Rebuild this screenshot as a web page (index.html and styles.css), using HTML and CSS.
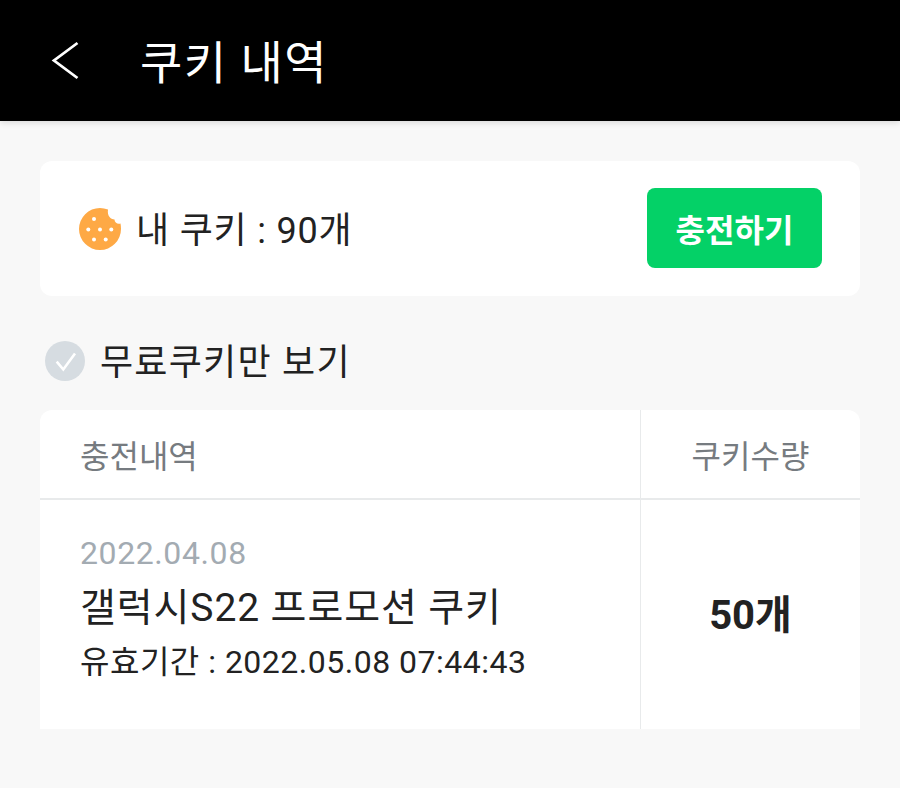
FILE: index.html
```html
<!DOCTYPE html>
<html lang="ko">
<head>
<meta charset="utf-8">
<title>쿠키 내역</title>
<link rel="stylesheet" href="styles.css">
</head>
<body>
<header class="topbar">
  <svg class="back" width="30" height="40" viewBox="0 0 30 40"><path d="M26.500 3 L3 20.500 L26.500 38" fill="none" stroke="#fff" stroke-width="2.800"/></svg>
  <h1 class="title">쿠키 내역</h1>
</header>
<main class="content">
  <section class="balance">
    <div class="balance-left">
      <svg class="cookie" width="42" height="42" viewBox="0 0 42 42">
        <path d="M21 0 A21 21 0 1 0 42 21 Q42 18 41.500 15.500 C38.500 16.500 35.500 14.500 35.500 11.500 C31.500 11.500 28 8 29 1.600 Q25 0 21 0 Z" fill="#fea945"/>
        <g fill="#fff">
          <circle cx="15" cy="11" r="2"/><circle cx="9.300" cy="21.500" r="2"/><circle cx="21" cy="21.500" r="2"/><circle cx="32.300" cy="21.500" r="2"/><circle cx="15" cy="31.500" r="2"/><circle cx="26.700" cy="31.500" r="2"/>
        </g>
      </svg>
      <span class="balance-text">내 쿠키 : 90개</span>
    </div>
    <button class="charge">충전하기</button>
  </section>
  <div class="filter">
    <svg class="check" width="40" height="40" viewBox="0 0 40 40"><circle cx="20" cy="20" r="20" fill="#d6dce1"/><path d="M11.700 20.700 L18.300 28.500 L30 12.500" fill="none" stroke="#fff" stroke-width="2.600"/></svg>
    <span class="filter-text">무료쿠키만 보기</span>
  </div>
  <section class="history">
    <div class="row head">
      <div class="col-main head-cell">충전내역</div>
      <div class="col-qty head-cell">쿠키수량</div>
    </div>
    <div class="row body">
      <div class="col-main item">
        <div class="date">2022.04.08</div>
        <div class="name">갤럭시S22 프로모션 쿠키</div>
        <div class="expiry">유효기간 : 2022.05.08 07:44:43</div>
      </div>
      <div class="col-qty amount">50개</div>
    </div>
  </section>
</main>
</body>
</html>
```
FILE: styles.css
```css
* { box-sizing: border-box; }
html, body { margin: 0; padding: 0; }
body {
  width: 900px;
  height: 788px;
  overflow: hidden;
  background: #f8f8f8;
  font-family: Roboto, "Noto Sans CJK KR", sans-serif;
  color: #222;
}
.topbar {
  height: 121px;
  background: #000;
  display: flex;
  align-items: center;
  padding-left: 51px;
  box-shadow: 0 2px 6px rgba(0,0,0,.12);
}
.back { display: block; margin-right: 59px; margin-top: -1px; }
.title { margin: 4px 0 0; font-size: 46px; font-weight: 400; color: #fff; letter-spacing: 1.500px; line-height: 1; }
.content { padding: 40px 40px 0; }
.balance {
  height: 135px;
  background: #fff;
  border-radius: 12px;
  display: flex;
  align-items: center;
  justify-content: space-between;
  padding: 0 38px 0 39px;
}
.balance-left { display: flex; align-items: center; gap: 15px; }
.cookie { display: block; }
.balance-text { font-size: 36px; line-height: 1; letter-spacing: 0.800px; padding-top: 5px; }
.charge {
  width: 175px;
  height: 80px;
  margin-top: -1px;
  border: 0;
  border-radius: 8px;
  background: #04d167;
  color: #fff;
  font: 700 32px Roboto, "Noto Sans CJK KR", sans-serif;
}
.filter { display: flex; align-items: center; gap: 15px; height: 114px; padding: 15px 0 0 5px; }
.check { display: block; }
.filter-text { font-size: 36px; line-height: 1; letter-spacing: 1.250px; padding-top: 4px; }
.history { background: #fff; border-radius: 12px 12px 0 0; }
.row { display: flex; }
.head { height: 90px; border-bottom: 2px solid #e8eaeb; }
.body { height: 229px; }
.col-main { flex: 1; padding-left: 40px; border-right: 1px solid #e8eaeb; }
.col-qty { width: 219px; text-align: center; }
.head-cell { font-size: 32px; color: #767b80; line-height: 94px; }
.item { padding-top: 33px; }
.date { font-size: 32px; color: #a3abb2; line-height: 40px; letter-spacing: 0.600px; }
.name { font-size: 39px; line-height: 48px; margin-top: 11px; letter-spacing: 0.900px; }
.expiry { font-size: 32px; line-height: 40px; margin-top: 10px; letter-spacing: 0.500px; }
.amount { font-size: 40px; font-weight: 700; line-height: 232px; }
```
